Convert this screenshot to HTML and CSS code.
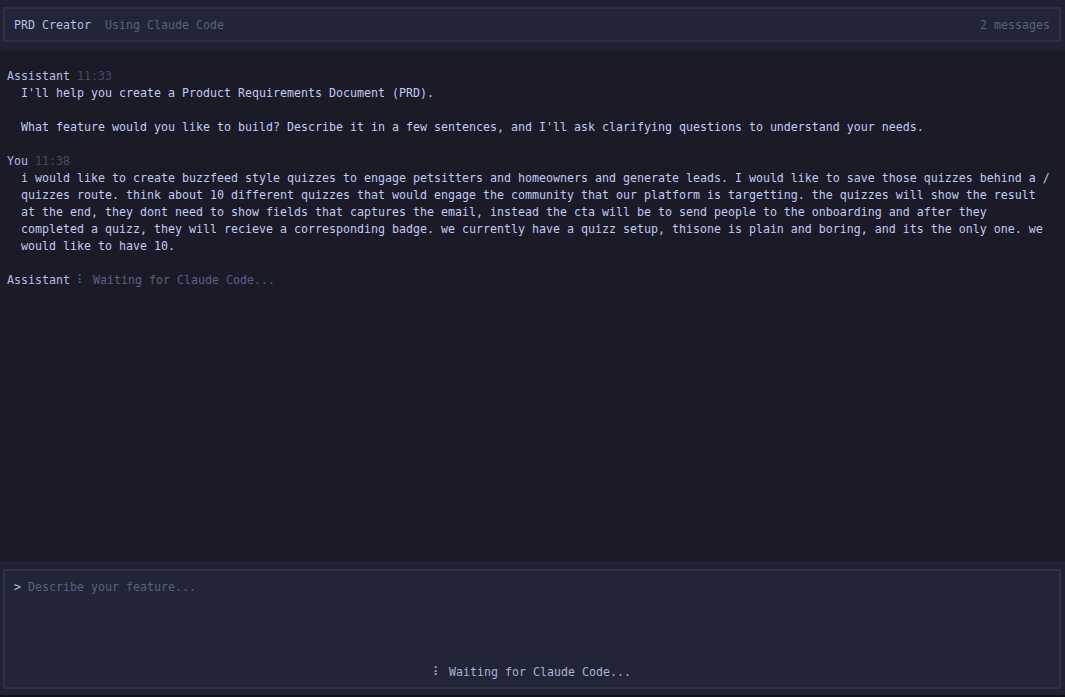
FILE: index.html
```html
<!DOCTYPE html>
<html lang="en">
<head>
<meta charset="utf-8">
<title>PRD Creator</title>
<link rel="stylesheet" href="styles.css">
</head>
<body>
<div class="app">
  <header class="topbar">
    <div class="topbar-box">
      <div class="title"><span class="app-name">PRD Creator</span><span class="subtitle">Using Claude Code</span></div>
      <div class="count">2 messages</div>
    </div>
  </header>
  <main class="messages">
    <div class="msg">
      <div class="msg-head"><span class="role">Assistant</span> <span class="time">11:33</span></div>
      <div class="msg-body">I'll help you create a Product Requirements Document (PRD).

What feature would you like to build? Describe it in a few sentences, and I'll ask clarifying questions to understand your needs.</div>
    </div>
    <div class="msg">
      <div class="msg-head"><span class="role">You</span> <span class="time">11:38</span></div>
      <div class="msg-body">i would like to create buzzfeed style quizzes to engage petsitters and homeowners and generate leads. I would like to save those quizzes behind a /<wbr>quizzes route. think about 10 different quizzes that would engage the community that our platform is targetting. the quizzes will show the result at the end, they dont need to show fields that captures the email, instead the cta will be to send people to the onboarding and after they completed a quizz, they will recieve a corresponding badge. we currently have a quizz setup, thisone is plain and boring, and its the only one. we would like to have 10.</div>
    </div>
    <div class="msg">
      <div class="msg-head"><span class="role">Assistant</span> <span class="spin">⠇</span> <span class="waiting">Waiting for Claude Code...</span></div>
    </div>
  </main>
  <footer class="composer">
    <div class="composer-box">
      <div class="prompt-line"><span class="caret">&gt;</span> <span class="placeholder">Describe your feature...</span></div>
      <div class="status"><span class="spin-status">⠇</span> Waiting for Claude Code...</div>
    </div>
  </footer>
</div>
</body>
</html>
```

FILE: styles.css
```css
* { box-sizing: border-box; }
html, body {
  margin: 0;
  padding: 0;
  height: 100%;
  background: #1a1b26;
}
body {
  font-family: "DejaVu Sans Mono", "Liberation Mono", monospace;
  font-size: 11.63px;
  line-height: 17px;
  color: #c0caf5;
}
.app {
  height: 697px;
  display: flex;
  flex-direction: column;
  border-bottom: 2px solid #111217;
}
.topbar {
  background: #1f2233;
  padding: 7px 4px 8px 3px;
}
.topbar-box {
  height: 35px;
  border: 2px solid #2d3148;
  background: #222537;
  display: flex;
  align-items: center;
  justify-content: space-between;
  padding: 1px 9px 0 9px;
}
.app-name { color: #b4bce6; }
.subtitle { color: #5a6182; margin-left: 14px; }
.count { color: #5a6182; }
.messages {
  flex: 1;
  padding: 18px 12px 0 7px;
  overflow: hidden;
}
.msg { margin-bottom: 17px; }
.role { color: #b4bce6; }
.time { color: #454b68; }
.spin { color: #5a6182; }
.waiting { color: #5a6182; }
.msg-body {
  padding-left: 14px;
  white-space: pre-wrap;
  color: #c0caf5;
  max-width: 1045px;
}
.composer {
  background: #1f2233;
  padding: 8px 4px 6px 3px;
}
.composer-box {
  height: 120px;
  border: 2px solid #2d3148;
  background: #222537;
  display: flex;
  flex-direction: column;
  justify-content: space-between;
  padding: 8px 9px 6px 9px;
}
.caret { color: #b4bce6; }
.placeholder { color: #5a6182; }
.status {
  text-align: center;
  color: #a9b1d6;
}
.spin-status { color: #a9b1d6; }
```
